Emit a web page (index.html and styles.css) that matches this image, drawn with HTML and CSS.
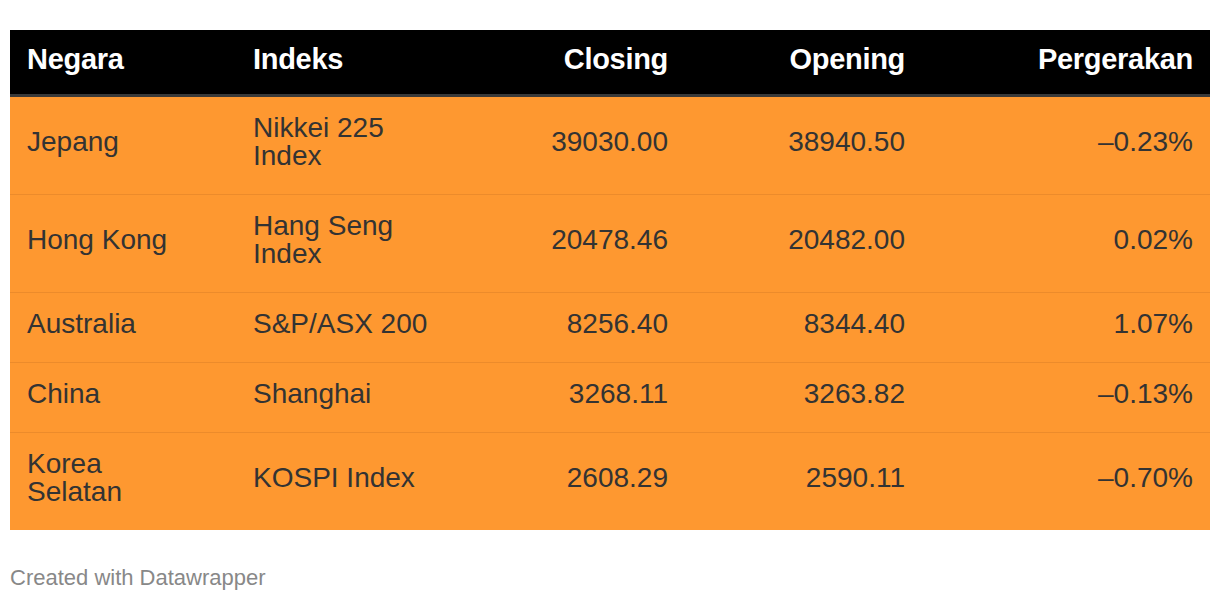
FILE: index.html
```html
<!DOCTYPE html>
<html lang="id">
<head>
<meta charset="utf-8">
<title>Indeks Asia</title>
<link rel="stylesheet" href="styles.css">
</head>
<body>
<div class="wrap">
  <table class="dw-table">
    <colgroup>
      <col class="c1"><col class="c2"><col class="c3"><col class="c4"><col class="c5">
    </colgroup>
    <thead>
      <tr>
        <th class="country">Negara</th>
        <th>Indeks</th>
        <th class="num">Closing</th>
        <th class="num">Opening</th>
        <th class="num">Pergerakan</th>
      </tr>
    </thead>
    <tbody>
      <tr>
        <td class="country">Jepang</td>
        <td>Nikkei 225 Index</td>
        <td class="num">39030.00</td>
        <td class="num">38940.50</td>
        <td class="num">–0.23%</td>
      </tr>
      <tr>
        <td class="country">Hong Kong</td>
        <td>Hang Seng Index</td>
        <td class="num">20478.46</td>
        <td class="num">20482.00</td>
        <td class="num">0.02%</td>
      </tr>
      <tr>
        <td class="country">Australia</td>
        <td>S&amp;P/ASX 200</td>
        <td class="num">8256.40</td>
        <td class="num">8344.40</td>
        <td class="num">1.07%</td>
      </tr>
      <tr>
        <td class="country">China</td>
        <td>Shanghai</td>
        <td class="num">3268.11</td>
        <td class="num">3263.82</td>
        <td class="num">–0.13%</td>
      </tr>
      <tr>
        <td class="country">Korea Selatan</td>
        <td>KOSPI Index</td>
        <td class="num">2608.29</td>
        <td class="num">2590.11</td>
        <td class="num">–0.70%</td>
      </tr>
    </tbody>
  </table>
  <p class="footer">Created with Datawrapper</p>
</div>
</body>
</html>
```

FILE: styles.css
```css
html, body {
  margin: 0;
  padding: 0;
  background: #ffffff;
}

body {
  font-family: "Liberation Sans", Arial, Helvetica, sans-serif;
}

.wrap {
  padding: 30px 10px 0 10px;
}

.dw-table {
  width: 1200px;
  border-collapse: collapse;
  table-layout: fixed;
}

.c1 { width: 226px; }
.c2 { width: 226px; }
.c3 { width: 223px; }
.c4 { width: 237px; }
.c5 { width: 288px; }

.dw-table th {
  background: #000000;
  color: #ffffff;
  font-weight: bold;
  font-size: 29px;
  line-height: 28px;
  text-align: left;
  padding: 15px 17px 21px 17px;
  border-bottom: 3px solid #3a3a3a;
  letter-spacing: -0.3px;
}

.dw-table td {
  background: #fe9830;
  color: #333333;
  font-size: 28px;
  line-height: 28px;
  padding: 17px 17px 24px 17px;
  vertical-align: middle;
  border-bottom: 1px solid #ec8b2b;
}

.dw-table tbody tr:last-child td {
  border-bottom: 0;
}

.dw-table .country {
  padding-right: 48px;
}

.dw-table .num {
  text-align: right;
}

.footer {
  margin: 35px 0 0 0;
  font-size: 22px;
  line-height: 26px;
  color: #888888;
}
```
